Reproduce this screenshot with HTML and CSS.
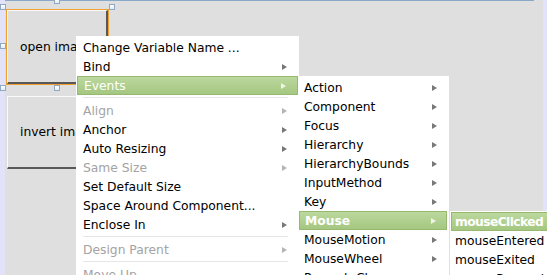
FILE: index.html
```html
<!DOCTYPE html>
<html lang="en">
<head>
    <meta charset="UTF-8">
    <title>Form Designer</title>
    <link rel="stylesheet" href="styles.css">
</head>
<body>
    <div class="canvas">
        <div class="topline"></div>
        <div class="leftstrip"></div>
        <div class="rightstrip"></div>

        <!-- components on the form -->
        <div class="jbutton open-btn selected"><span>open image</span></div>
        <div class="jbutton invert-btn"><span>invert image</span></div>

        <!-- selection handles -->
        <div class="handle h-tl"></div>
        <div class="handle h-tc"></div>
        <div class="handle h-tr"></div>
        <div class="handle h-ml"></div>
        <div class="handle h-bl"></div>
        <div class="handle h-bc"></div>

        <!-- context menu -->
        <div class="menu main-menu">
            <div class="item">Change Variable Name ...</div>
            <div class="item">Bind <i class="arrow"></i></div>
            <div class="item active">Events <i class="arrow"></i></div>
            <div class="sep"></div>
            <div class="item disabled">Align <i class="arrow"></i></div>
            <div class="item">Anchor <i class="arrow"></i></div>
            <div class="item">Auto Resizing <i class="arrow"></i></div>
            <div class="item disabled">Same Size <i class="arrow"></i></div>
            <div class="item">Set Default Size</div>
            <div class="item">Space Around Component...</div>
            <div class="item">Enclose In <i class="arrow"></i></div>
            <div class="sep"></div>
            <div class="item disabled">Design Parent <i class="arrow"></i></div>
            <div class="sep"></div>
            <div class="item disabled">Move Up</div>
            <div class="item disabled">Move Down</div>
        </div>

        <div class="menu events-menu">
            <div class="item">Action <i class="arrow"></i></div>
            <div class="item">Component <i class="arrow"></i></div>
            <div class="item">Focus <i class="arrow"></i></div>
            <div class="item">Hierarchy <i class="arrow"></i></div>
            <div class="item">HierarchyBounds <i class="arrow"></i></div>
            <div class="item">InputMethod <i class="arrow"></i></div>
            <div class="item">Key <i class="arrow"></i></div>
            <div class="item active bold">Mouse <i class="arrow"></i></div>
            <div class="item">MouseMotion <i class="arrow"></i></div>
            <div class="item">MouseWheel <i class="arrow"></i></div>
            <div class="item">PropertyChange <i class="arrow"></i></div>
        </div>

        <div class="menu mouse-menu">
            <div class="item active bold">mouseClicked</div>
            <div class="item">mouseEntered</div>
            <div class="item">mouseExited</div>
            <div class="item">mousePressed</div>
        </div>
    </div>
</body>
</html>
```

FILE: styles.css
```css
body {
    margin: 0;
    background-color: #fff;
    font-family: "DejaVu Sans", sans-serif;
    font-size: 12.3px;
    overflow: hidden;
}
.canvas {
    position: relative;
    width: 547px;
    height: 275px;
    background-color: #dfdfdf;
    overflow: hidden;
}
.topline {
    position: absolute;
    top: 0;
    left: 0;
    width: 534px;
    height: 1px;
    background-color: #8aa8c8;
}
.leftstrip {
    position: absolute;
    top: 0;
    left: 0;
    width: 5px;
    height: 100%;
    background-color: #e2e2f8;
}
.rightstrip {
    position: absolute;
    top: 0;
    right: 0;
    width: 4px;
    height: 100%;
    background-color: #e2e2f8;
}
.jbutton {
    position: absolute;
    box-sizing: border-box;
    background-color: #dedede;
    border-top: 1px solid #fafafa;
    border-left: 1px solid #fafafa;
    border-right: 2px solid #585858;
    border-bottom: 2px solid #585858;
    display: flex;
    align-items: center;
    padding-left: 12px;
    white-space: nowrap;
    color: #000;
}
.open-btn {
    left: 7px;
    top: 10px;
    width: 101px;
    height: 74px;
}
.selected {
    outline: 1px solid #f0a030;
}
.invert-btn {
    left: 7px;
    top: 96px;
    width: 101px;
    height: 73px;
}
.handle {
    position: absolute;
    width: 6px;
    height: 6px;
    box-sizing: border-box;
    border: 1px solid #8fa8c4;
    background: linear-gradient(#ffffff, #e6ecf4);
}
.h-tl { left: 0; top: 4px; }
.h-tc { left: 54px; top: -2px; }
.h-tr { left: 109px; top: 4px; }
.h-ml { left: 0; top: 43px; }
.h-bl { left: 0; top: 85px; }
.h-bc { left: 54px; top: 85px; }

.menu {
    position: absolute;
    background-color: #fff;
    box-sizing: border-box;
}
.item {
    display: flex;
    align-items: center;
    justify-content: space-between;
    height: 19px;
    box-sizing: border-box;
    white-space: nowrap;
    color: #000;
}
.item.disabled {
    color: #a3a3a3;
}
.item.active {
    background: linear-gradient(#bcd89e, #a5c781);
    border: 1px solid #95b96f;
    color: #fff;
}
.item.bold {
    font-weight: bold;
}
.arrow {
    width: 0;
    height: 0;
    border-left: 5px solid #787878;
    border-top: 3px solid transparent;
    border-bottom: 3px solid transparent;
}
.disabled .arrow {
    border-left-color: #b4b4b4;
}
.active .arrow {
    border-left-color: #eef4e6;
}
.sep {
    height: 1px;
    background-color: #e6e6e6;
    margin: 2px 10px 3px 6px;
}
.main-menu {
    left: 76px;
    top: 36px;
    width: 223px;
    padding: 2px 1px;
}
.main-menu .item {
    padding: 0 11px 0 6px;
}
.events-menu {
    left: 299px;
    top: 76px;
    width: 150px;
    padding: 2px 2px 0 0;
}
.events-menu .item {
    padding: 0 10px 0 5px;
}
.mouse-menu {
    left: 450px;
    top: 211px;
    width: 103px;
    padding: 1px 1px 0 1px;
}
.mouse-menu .item {
    padding: 0 0 0 4px;
}
.mouse-menu .item.bold {
    padding-left: 3px;
    letter-spacing: -0.6px;
}
```
